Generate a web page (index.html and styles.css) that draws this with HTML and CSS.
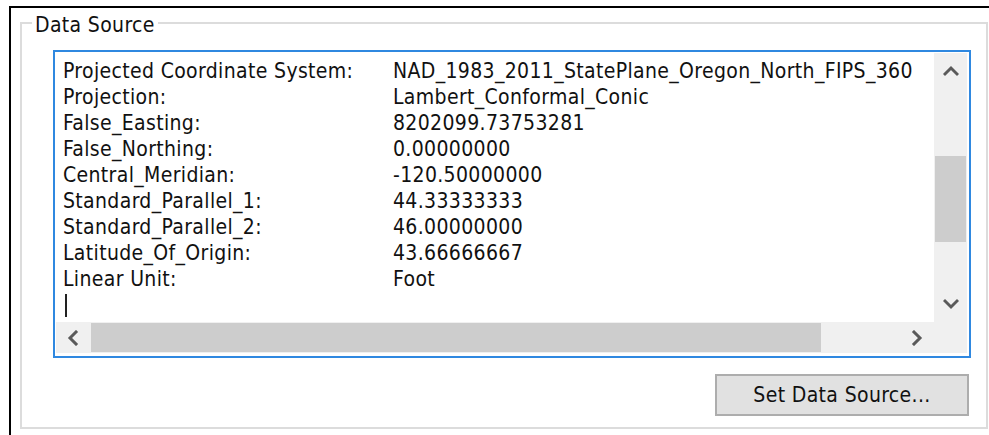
FILE: index.html
```html
<!DOCTYPE html>
<html lang="en">
<head>
<meta charset="utf-8">
<title>Layer Properties – Source</title>
<link rel="stylesheet" href="styles.css">
</head>
<body>
<div class="window">
  <fieldset class="group">
    <legend class="group-title">Data Source</legend>

    <div class="listbox">
      <div class="list-view">
        <div class="prop"><span class="prop-key">Projected Coordinate System:</span><span class="prop-val">NAD_1983_2011_StatePlane_Oregon_North_FIPS_360</span></div>
        <div class="prop"><span class="prop-key">Projection:</span><span class="prop-val">Lambert_Conformal_Conic</span></div>
        <div class="prop"><span class="prop-key">False_Easting:</span><span class="prop-val">8202099.73753281</span></div>
        <div class="prop"><span class="prop-key">False_Northing:</span><span class="prop-val">0.00000000</span></div>
        <div class="prop"><span class="prop-key">Central_Meridian:</span><span class="prop-val">-120.50000000</span></div>
        <div class="prop"><span class="prop-key">Standard_Parallel_1:</span><span class="prop-val">44.33333333</span></div>
        <div class="prop"><span class="prop-key">Standard_Parallel_2:</span><span class="prop-val">46.00000000</span></div>
        <div class="prop"><span class="prop-key">Latitude_Of_Origin:</span><span class="prop-val">43.66666667</span></div>
        <div class="prop"><span class="prop-key">Linear Unit:</span><span class="prop-val">Foot</span></div>
        <div class="prop"><span class="caret"></span></div>
      </div>

      <div class="vscroll">
        <span class="sb-btn sb-btn-v">
          <svg class="chev" width="16" height="16" viewBox="0 0 16 16"><polyline points="2,11 8,5 14,11"/></svg>
        </span>
        <span class="sb-track-v"><span class="thumb-v"></span></span>
        <span class="sb-btn sb-btn-v">
          <svg class="chev" width="16" height="16" viewBox="0 0 16 16"><polyline points="2,5 8,11 14,5"/></svg>
        </span>
      </div>

      <div class="hscroll">
        <span class="sb-btn sb-btn-h">
          <svg class="chev" width="16" height="16" viewBox="0 0 16 16"><polyline points="11,2 5,8 11,14"/></svg>
        </span>
        <span class="sb-track-h"><span class="thumb-h"></span></span>
        <span class="sb-btn sb-btn-h">
          <svg class="chev" width="16" height="16" viewBox="0 0 16 16"><polyline points="5,2 11,8 5,14"/></svg>
        </span>
      </div>
      <div class="sb-corner"></div>
    </div>

    <div class="actions">
      <button class="btn" type="button">Set Data Source...</button>
    </div>
  </fieldset>
</div>
</body>
</html>
```

FILE: styles.css
```css
html, body {
  margin: 0;
  background: #ffffff;
}

body {
  font-family: "DejaVu Sans Condensed", "DejaVu Sans", Verdana, sans-serif;
  font-stretch: condensed;
  font-size: 21px;
  letter-spacing: 0.35px;
  color: #111111;
  overflow: hidden;
}

/* dialog page, clipped by its parent window on the right and bottom */
.window {
  margin: 6px 0 0 9px;
  height: 429px;
  box-sizing: border-box;
  border-top: 2px solid #000000;
  border-left: 2px solid #000000;
}

/* group box */
.group {
  margin: 0 1px 0 9px;
  padding: 12px 15px 11px 10px;
  border: 2px solid #dcdcdc;
  min-width: 0;
}

.group-title {
  padding: 4px 3px 0;
  line-height: 26px;
}

/* read-only text box with both scrollbars */
.listbox {
  margin-left: 21px;
  border: 2px solid #2f88e0;
  padding: 1px 2px 3px 1px;
  background: #ffffff;
  display: grid;
  grid-template-columns: 1fr 33px;
  grid-template-rows: 269px 31px;
}

.list-view {
  overflow: hidden;
  padding: 5px 0 0 7px;
}

.prop {
  display: grid;
  grid-template-columns: 330px 1fr;
  height: 26px;
  line-height: 26px;
  white-space: nowrap;
}

.prop-val {
  overflow: hidden;
}

.caret {
  display: block;
  width: 2px;
  height: 23px;
  margin: 2px 0 0 2px;
  background: #222222;
}

/* scrollbars */
.vscroll {
  background: #f0f0f0;
  display: flex;
  flex-direction: column;
}

.hscroll {
  background: #f0f0f0;
  display: flex;
}

.sb-corner {
  background: #f0f0f0;
}

.sb-btn {
  display: flex;
  align-items: center;
  justify-content: center;
  flex: none;
}

.sb-btn-v {
  height: 36px;
}

.sb-btn-h {
  width: 34px;
}

.chev {
  fill: none;
  stroke: #5a5a5a;
  stroke-width: 3;
  stroke-linecap: square;
}

.sb-track-v {
  flex: 1;
  padding: 67px 1px 0;
}

.thumb-v {
  display: block;
  height: 86px;
  background: #cdcdcd;
}

.sb-track-h {
  flex: 1;
  padding: 1px 0 1px 1px;
}

.thumb-h {
  display: block;
  width: 730px;
  height: 100%;
  background: #cdcdcd;
}

/* command row */
.actions {
  display: flex;
  justify-content: flex-end;
  padding-top: 16px;
  padding-right: 2px;
}

.btn {
  width: 254px;
  height: 42px;
  margin: 0;
  padding: 0;
  border: 2px solid #adadad;
  background: #e1e1e1;
  font: inherit;
  font-stretch: condensed;
  letter-spacing: 0.35px;
  color: #111111;
  line-height: 26px;
}
```
